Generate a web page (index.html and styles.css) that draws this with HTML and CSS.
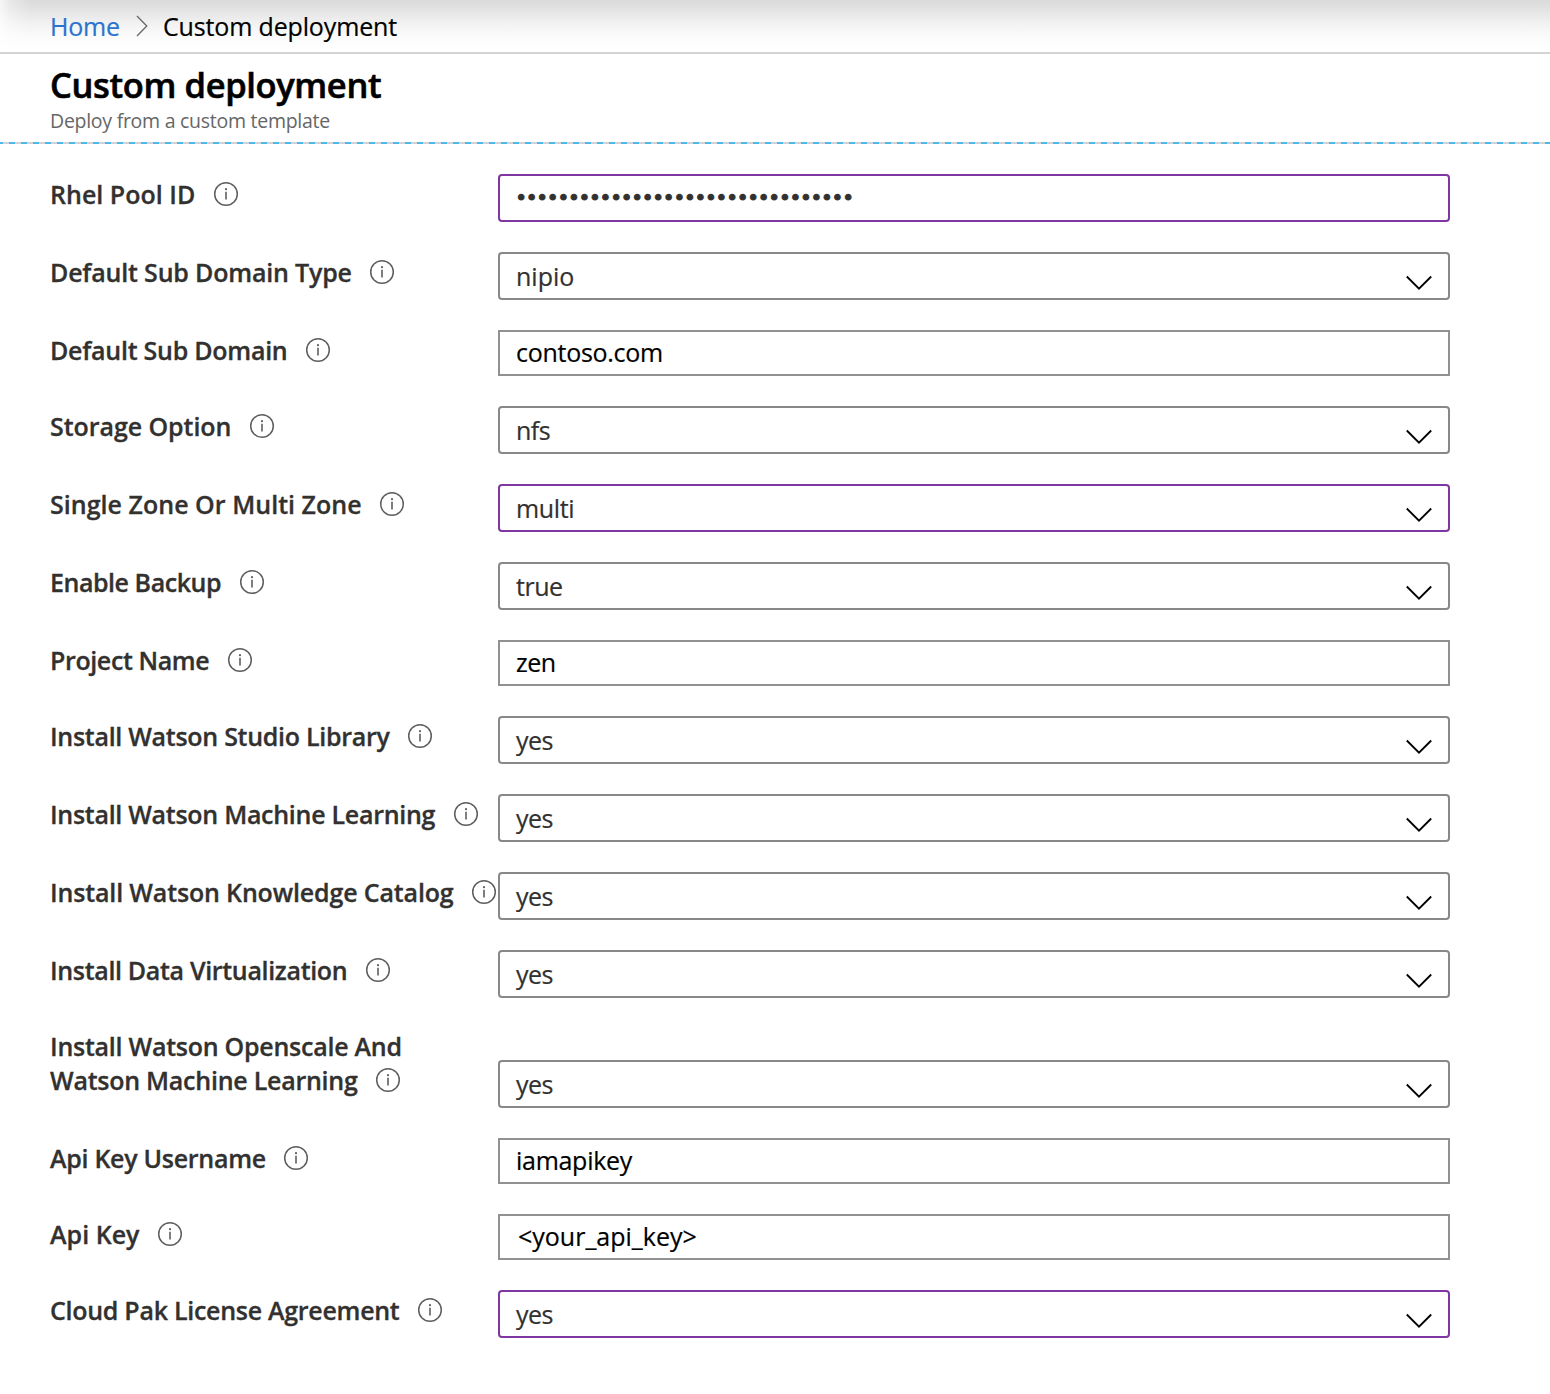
FILE: index.html
```
<!DOCTYPE html>
<html lang="en">
<head>
<meta charset="utf-8">
<title>Custom deployment</title>
<link rel="stylesheet" href="styles.css">
</head>
<body>
<svg class="defs" aria-hidden="true">
  <symbol id="info" viewBox="0 0 26 26">
    <circle cx="13" cy="13" r="11.3" fill="none" stroke="#5e5e5e" stroke-width="1.5"/>
    <path d="M13 10.8V18.6" stroke="#5e5e5e" stroke-width="1.6"/>
    <circle cx="13" cy="8.2" r="1.1" fill="#5e5e5e"/>
  </symbol>
  <symbol id="down" viewBox="0 0 28 16">
    <path d="M1.8 1.5L14 13.7L26.2 1.5" fill="none" stroke="#000" stroke-width="1.8"/>
  </symbol>
</svg>

<nav class="breadcrumb">
  <a class="crumb-link" href="#">Home</a>
  <svg class="crumb-sep" viewBox="0 0 12 22"><path d="M1 1L10.8 11L1 21" fill="none" stroke="#666" stroke-width="1.3"/></svg>
  <span class="crumb-current">Custom deployment</span>
</nav>

<header class="header">
  <h1 class="title">Custom deployment</h1>
  <p class="subtitle">Deploy from a custom template</p>
</header>

<main class="form">
  <div class="row"><div class="label loose">Rhel Pool ID<svg class="info"><use href="#info"/></svg></div><div class="field select edited"><span class="dots">••••••••••••••••••••••••••••••••</span></div></div>
  <div class="row"><div class="label tight-1">Default Sub Domain Type<svg class="info"><use href="#info"/></svg></div><div class="field select"><span>nipio</span><svg class="down"><use href="#down"/></svg></div></div>
  <div class="row"><div class="label tight-15">Default Sub Domain<svg class="info"><use href="#info"/></svg></div><div class="field input tight-2">contoso.com</div></div>
  <div class="row"><div class="label tight-0">Storage Option<svg class="info"><use href="#info"/></svg></div><div class="field select"><span class="tight-4">nfs</span><svg class="down"><use href="#down"/></svg></div></div>
  <div class="row"><div class="label loose">Single Zone Or Multi Zone<svg class="info"><use href="#info"/></svg></div><div class="field select edited"><span class="tight-3">multi</span><svg class="down"><use href="#down"/></svg></div></div>
  <div class="row"><div class="label tight-35">Enable Backup<svg class="info"><use href="#info"/></svg></div><div class="field select"><span class="tight-4">true</span><svg class="down"><use href="#down"/></svg></div></div>
  <div class="row"><div class="label tight-3">Project Name<svg class="info"><use href="#info"/></svg></div><div class="field input tight-4">zen</div></div>
  <div class="row"><div class="label tight-2">Install Watson Studio Library<svg class="info"><use href="#info"/></svg></div><div class="field select"><span class="tight-4">yes</span><svg class="down"><use href="#down"/></svg></div></div>
  <div class="row"><div class="label tight-2">Install Watson Machine Learning<svg class="info"><use href="#info"/></svg></div><div class="field select"><span class="tight-4">yes</span><svg class="down"><use href="#down"/></svg></div></div>
  <div class="row"><div class="label tight-05">Install Watson Knowledge Catalog<svg class="info"><use href="#info"/></svg></div><div class="field select"><span class="tight-4">yes</span><svg class="down"><use href="#down"/></svg></div></div>
  <div class="row"><div class="label tight-25">Install Data Virtualization<svg class="info"><use href="#info"/></svg></div><div class="field select"><span class="tight-4">yes</span><svg class="down"><use href="#down"/></svg></div></div>
  <div class="row row-tall"><div class="label tight-15">Install Watson Openscale And<br>Watson Machine Learning<svg class="info"><use href="#info"/></svg></div><div class="field select"><span class="tight-4">yes</span><svg class="down"><use href="#down"/></svg></div></div>
  <div class="row"><div class="label tight-2">Api Key Username<svg class="info"><use href="#info"/></svg></div><div class="field input tight-2">iamapikey</div></div>
  <div class="row"><div class="label loose">Api Key<svg class="info"><use href="#info"/></svg></div><div class="field input code">&lt;your_api_key&gt;</div></div>
  <div class="row"><div class="label tight-2">Cloud Pak License Agreement<svg class="info"><use href="#info"/></svg></div><div class="field select edited"><span class="tight-4">yes</span><svg class="down"><use href="#down"/></svg></div></div>
</main>
</body>
</html>
```
FILE: styles.css
```
* { box-sizing: border-box; }

body {
  margin: 0;
  min-height: 1394px;
  background: #fff;
  color: #323130;
  font: 400 25px/34px "Open Sans", "Noto Sans", sans-serif;
}

.defs { display: none; }

.breadcrumb {
  display: flex;
  height: 54px;
  padding: 9px 50px 0;
  border-bottom: 2px solid #d4d4d4;
  background:
    linear-gradient(90deg, rgba(255, 255, 255, .75), rgba(255, 255, 255, .35) 10px, rgba(255, 255, 255, 0) 30px),
    linear-gradient(#dbdbdb, #dedede 5px, #e9e9e9 15px, #f3f3f3 25px, #fafafa 35px, #fff 50px);
}
.crumb-link { width: 86px; color: #2b74ce; text-decoration: none; letter-spacing: -.2px; -webkit-text-stroke: .2px; }
.crumb-sep { width: 12px; height: 22px; margin-top: 6px; }
.crumb-current { margin-left: 15px; color: #000; letter-spacing: -.15px; -webkit-text-stroke: .2px; }

.header {
  height: 90px;
  padding: 7px 50px 0;
  background: repeating-linear-gradient(90deg, #4cb8ea 0 3px, #d2d2d2 3px 9px, #4cb8ea 9px 12px) 0 100% / 100% 2px no-repeat;
}
.title { margin: 0; font-size: 34.5px; line-height: 48px; font-weight: 600; color: #000; letter-spacing: -.37px; -webkit-text-stroke: .6px; }
.subtitle { margin: -1px 0 0; font-size: 19.5px; line-height: 26px; color: #666; letter-spacing: -.27px; }

.form {
  display: flex;
  flex-direction: column;
  gap: 30px;
  padding: 30px 100px 0 50px;
}
.row { display: grid; grid-template-columns: 448px 952px; align-items: end; }
.row-tall { height: 80px; }
.label { align-self: start; height: 34px; padding-top: 3px; font-weight: 600; white-space: nowrap; -webkit-text-stroke: .3px; }
.row-tall .label { padding-top: 1px; }
.info { width: 26px; height: 26px; margin-left: 17.5px; vertical-align: -3px; }

.field { display: flex; border: 2px solid #8a8886; padding-left: 16px; -webkit-text-stroke: .2px; }
.input { height: 46px; padding-top: 3px; border-color: #919191; color: #000; }
.select { height: 48px; padding-top: 5px; border-radius: 4px; justify-content: space-between; }
.edited { border-color: #8036a0; }
.code { padding-left: 18px; }
.down { width: 28px; height: 16px; margin: 16px 15px 0 0; }
.dots { margin-left: -.8px; font: 20px/32px "DejaVu Sans", sans-serif; letter-spacing: -1.25px; -webkit-text-stroke: .9px; }

.loose { letter-spacing: .03px; }
.tight-0 { letter-spacing: -.06px; }
.tight-05 { letter-spacing: -.15px; }
.tight-1 { letter-spacing: -.18px; }
.tight-15 { letter-spacing: -.25px; }
.tight-2 { letter-spacing: -.28px; }
.tight-25 { letter-spacing: -.33px; }
.tight-3 { letter-spacing: -.38px; }
.tight-35 { letter-spacing: -.45px; }
.tight-4 { letter-spacing: -.5px; }
```
